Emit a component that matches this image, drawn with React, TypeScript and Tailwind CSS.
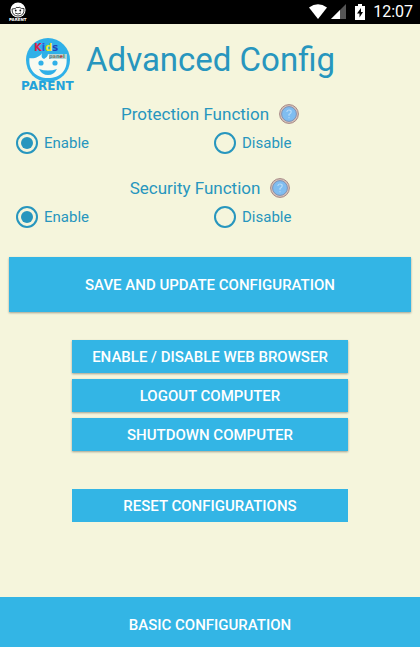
import React from "react";

function KidsLogo() {
  return (
    <svg viewBox="0 0 56 56" className="h-14 w-14 shrink-0" role="img" aria-label="Kids Parent">
      <circle cx="28" cy="23" r="22" fill="#2fb0e8" />
      <path
        d="M9.500 21 C14 22 20 20 22 16 C21 20 22 21 24 22 C26 21 28 19 28 17 C33 20 40 21 46.500 20 C48 34 40 41 28 41 C16 41 8 33 9.500 21 Z"
        fill="#f8faf0"
      />
      <circle cx="21" cy="26" r="2.6" fill="#2fb0e8" />
      <circle cx="35" cy="26" r="2.6" fill="#2fb0e8" />
      <path d="M19 32 Q28 35 37 32 Q34 38 28 38 Q22 38 19 32 Z" fill="#2fb0e8" />
      <text x="14" y="14" fontFamily="'DejaVu Sans', sans-serif" fontWeight="700" fontSize="10">
        <tspan fill="#d42348">K</tspan>
        <tspan fill="#2a52d8">i</tspan>
        <tspan fill="#efe51e">d</tspan>
        <tspan fill="#2440b8">s</tspan>
      </text>
      <rect x="29" y="17" width="18" height="5" fill="#b5d3d6" />
      <text x="29" y="21" fontFamily="'DejaVu Sans', sans-serif" fontWeight="700" fontSize="5">
        <tspan fill="#5a7f8e">p</tspan>
        <tspan fill="#7f7a60">a</tspan>
        <tspan fill="#3d7b7b">n</tspan>
        <tspan fill="#b0423c">e</tspan>
        <tspan fill="#2e8a48">l</tspan>
      </text>
      <text x="1" y="53" fontFamily="'DejaVu Sans', sans-serif" fontWeight="700" fontSize="12" fill="#22a2da">
        PARENT
      </text>
    </svg>
  );
}

function StatusLogo() {
  return (
    <svg viewBox="0 0 20 20" className="h-5 w-5" role="img" aria-label="Parent">
      <circle cx="10" cy="8" r="7.6" fill="#fff" />
      <path
        d="M4 7 Q8 7 9 5 Q10 7 11 5 Q13 7 16 6.5 Q16.500 14 10 14 Q4 14 4 7 Z"
        fill="#fff"
        stroke="#111"
        strokeWidth="0.8"
      />
      <circle cx="7.700" cy="8.500" r="0.9" fill="#111" />
      <circle cx="12.300" cy="8.500" r="0.9" fill="#111" />
      <path d="M7 11 Q10 13 13 11" fill="none" stroke="#111" strokeWidth="0.8" />
      <text x="1" y="19" fontFamily="'DejaVu Sans', sans-serif" fontWeight="700" fontSize="4" fill="#fff">
        PARENT
      </text>
    </svg>
  );
}

function StatusBar() {
  return (
    <div className="flex h-6 items-center bg-black pr-[7px] pl-2 text-white">
      <StatusLogo />
      <div className="ml-auto flex items-center">
        <svg viewBox="0 0 18 16" className="h-4 w-[18px]" aria-hidden="true">
          <path d="M0 3.500 Q9 -3 18 3.500 L9 15 Z" fill="#fff" />
        </svg>
        <svg viewBox="0 0 16 16" className="ml-1 h-4 w-4" aria-hidden="true">
          <path d="M0 15 L15 0 V15 Z" fill="#555" />
          <path d="M0 15 L9 6 V15 Z" fill="#fff" />
        </svg>
        <svg viewBox="0 0 10 16" className="ml-2 h-4 w-[10px]" aria-hidden="true">
          <path d="M3 0 H7 V2 H10 V16 H0 V2 H3 Z" fill="#fff" />
          <path d="M6 4 L2 9.500 H4.500 V13.500 L8 8 H6 Z" fill="#000" />
        </svg>
        <time className="ml-2 text-base leading-6">12:07</time>
      </div>
    </div>
  );
}

function HelpButton({ label }: { label: string }) {
  return (
    <button type="button" aria-label={label} className="mb-0.5 ml-2.5 h-5 w-5">
      <svg viewBox="0 0 20 20" className="h-5 w-5" aria-hidden="true">
        <circle cx="10" cy="10" r="9.400" fill="#d6c3b8" stroke="#a58787" strokeWidth="1" />
        <circle cx="10" cy="10" r="7.400" fill="#7fbdf0" stroke="#8191b5" strokeWidth="1" />
        <path
          d="M7.800 8 Q8 6 10 6 Q12.300 6 12.200 8 Q12 9.300 10 10.500 V11.800 M10 13.200 V14.300"
          fill="none"
          stroke="#b9dcf8"
          strokeWidth="1.200"
        />
      </svg>
    </button>
  );
}

function RadioOption({ name, value, checked }: { name: string; value: string; checked?: boolean }) {
  return (
    <label className="flex items-center gap-1.5 text-[15px]">
      <input
        type="radio"
        name={name}
        value={value}
        defaultChecked={checked}
        className="h-[22px] w-[22px] appearance-none rounded-full border-2 border-[#2796be] bg-clip-content p-[3px] checked:bg-[#2796be]"
      />
      {value}
    </label>
  );
}

function FunctionSetting({ title, name }: { title: string; name: string }) {
  return (
    <fieldset className="mb-[18px]" aria-label={title}>
      <div className="flex h-7 items-center justify-center text-[17px]">
        {title}
        <HelpButton label={"About " + title} />
      </div>
      <div className="grid h-7 grid-cols-2 items-center pr-2 pl-4">
        <RadioOption name={name} value="Enable" checked />
        <RadioOption name={name} value="Disable" />
      </div>
    </fieldset>
  );
}

const buttonStyle = "w-full bg-[#33b5e5] text-[15px] font-medium text-white";
const raised = "shadow-[0_1px_2px_rgba(0,0,0,0.35)]";

export default function App() {
  return (
    <div className="flex min-h-screen flex-col bg-[#f5f5dc] font-[Roboto,sans-serif] text-[#2796be]">
      <StatusBar />
      <main className="flex grow flex-col">
        <header className="flex items-start gap-2.5 px-5 pt-[13px] pb-2">
          <KidsLogo />
          <h1 className="text-[33px] leading-[46px]">Advanced Config</h1>
        </header>
        <FunctionSetting title="Protection Function" name="protection" />
        <FunctionSetting title="Security Function" name="security" />
        <div className="mt-2 px-[9px]">
          <button type="button" className={buttonStyle + " h-[55px] pt-0.5 " + raised}>
            SAVE AND UPDATE CONFIGURATION
          </button>
        </div>
        <div className="mt-7 flex flex-col gap-1.5 px-[72px]">
          <button type="button" className={buttonStyle + " h-[33px] pt-0.5 " + raised}>
            ENABLE / DISABLE WEB BROWSER
          </button>
          <button type="button" className={buttonStyle + " h-[33px] pt-0.5 " + raised}>
            LOGOUT COMPUTER
          </button>
          <button type="button" className={buttonStyle + " h-[33px] pt-0.5 " + raised}>
            SHUTDOWN COMPUTER
          </button>
        </div>
        <div className="mt-[38px] px-[72px]">
          <button type="button" className={buttonStyle + " h-[33px] pt-0.5"}>
            RESET CONFIGURATIONS
          </button>
        </div>
      </main>
      <footer>
        <button type="button" className={buttonStyle + " h-[50px] pt-1.5"}>
          BASIC CONFIGURATION
        </button>
      </footer>
    </div>
  );
}
